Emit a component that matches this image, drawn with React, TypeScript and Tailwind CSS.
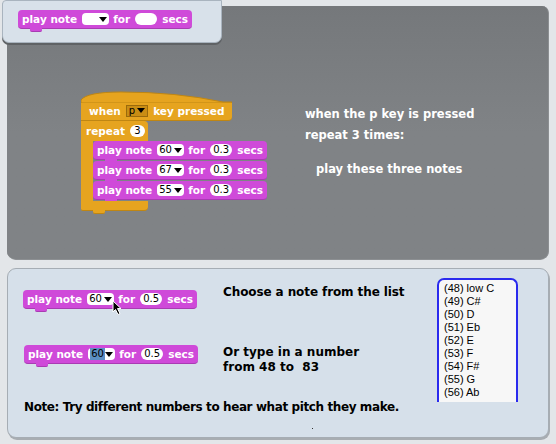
import React from "react";

const F = { fontFamily: '"DejaVu Sans", Verdana, sans-serif' };

function Tri() {
  return <div className="w-0 h-0 border-x-[4px] border-x-transparent border-t-[5px] border-t-black" />;
}

function Drop({ v, hl }: { v?: string; hl?: boolean }) {
  return (
    <div className="flex items-center h-[12px] w-[27px] bg-white rounded-[4px] pl-[2px] pr-[2px] text-black font-normal text-[10px] leading-none">
      {v ? (
        <span className={hl ? "bg-[#5b8fc4] text-black px-[1px] h-[12px] flex items-center" : ""}>{v}</span>
      ) : null}
      <div className="ml-auto">
        <Tri />
      </div>
    </div>
  );
}

function Num({ v, w }: { v?: string; w?: string }) {
  return (
    <div
      className={
        "flex items-center justify-center h-[12px] bg-white rounded-full px-[3px] text-black font-normal text-[10px] leading-none " +
        (w ?? "min-w-[22px]")
      }
    >
      {v}
    </div>
  );
}

function NoteBlock({ note, dur, hl }: { note?: string; dur?: string; hl?: boolean }) {
  return (
    <div
      style={F}
      className="relative flex items-center gap-[5px] h-[19px] w-fit rounded-[4px] bg-[#cf4ad9] border-b border-[#a93bb3] pl-[4px] pr-[4px] text-white font-bold text-[10.5px] leading-none"
    >
      <span>play note</span>
      <Drop v={note} hl={hl} />
      <span className="-ml-[1px]">for</span>
      <Num v={dur} />
      <span>secs</span>
      <div className="absolute left-[12px] top-full w-[12px] h-[4px] bg-[#cf4ad9] border-b border-[#a93bb3] rounded-b-[2px]" />
    </div>
  );
}

function Script() {
  return (
    <div className="relative w-[224px]" style={F}>
      {/* hat */}
      <div className="relative w-[151px]">
        <svg width="151" height="12" viewBox="0 0 151 12" className="block">
          <path d="M0 12 L0 9 Q 6 1 40 1 Q 95 1 142 11 L 151 11 L151 12 Z" fill="#e6a41f" stroke="#bf8613" strokeWidth="1" />
        </svg>
        <div className="flex items-center h-[19px] bg-[#e6a41f] rounded-br-[4px] -mt-[1px] pl-[8px] text-white font-bold text-[10.5px] leading-none gap-[5px] border-b border-[#bf8613]">
          <span>when</span>
          <div className="flex items-center h-[12px] px-[2px] gap-[2px] bg-[#c98d14] border border-[#9a6a0c] text-black font-normal text-[10px] -mt-[1px]">
            <span>p</span>
            <Tri />
          </div>
          <span>key pressed</span>
        </div>
      </div>
      {/* repeat */}
      <div className="relative">
        <div className="flex items-center h-[20px] w-[67px] bg-[#e6a41f] rounded-tr-[4px] pl-[5px] text-white font-bold text-[10.5px] leading-none gap-[5px]">
          <span>repeat</span>
          <Num v="3" w="min-w-[15px]" />
        </div>
        <div className="flex">
          <div className="w-[12px] bg-[#e6a41f]" />
          <div className="flex flex-col gap-[1px] pb-[1px]">
            <NoteBlock note="60" dur="0.3" />
            <NoteBlock note="67" dur="0.3" />
            <NoteBlock note="55" dur="0.3" />
          </div>
        </div>
        <div className="relative h-[10px] w-[67px] bg-[#e6a41f] rounded-br-[4px] rounded-bl-[2px] border-b border-[#bf8613]">
          <div className="absolute left-[12px] top-full w-[12px] h-[4px] bg-[#e6a41f] border-b border-[#bf8613] rounded-b-[2px]" />
        </div>
      </div>
    </div>
  );
}

export default function App() {
  return (
    <div className="relative w-[556px] h-[444px] bg-[#e3e6e9] overflow-hidden">
      {/* gray script area */}
      <div className="ml-[7px] mr-[7px] mt-[6px] h-[254px] rounded-b-[9px] rounded-tr-[7px] bg-[#808386] bg-gradient-to-b from-[#75787b] via-[#808386] to-[#808386] border-r border-b border-[#8c8f92]">
        <div className="flex pt-[85px] pl-[74px]">
          <Script />
          <div
            style={F}
            className="pt-[13px] text-white font-bold text-[11.5px] leading-[21px]"
          >
            <div>when the p key is pressed</div>
            <div>repeat 3 times:</div>
            <div className="mt-[13px] ml-[11px]">play these three notes</div>
          </div>
        </div>
      </div>

      {/* palette tab */}
      <div className="absolute left-[2px] top-0 w-[220px] h-[43px] bg-[#d8e1ea] rounded-b-[7px] rounded-tl-[4px] border border-[#a9b4bf] shadow-[0_2px_0_#5f6265]">
        <div className="pl-[15px] pt-[9px]">
          <NoteBlock />
        </div>
      </div>

      {/* bottom help panel */}
      <div className="relative ml-[7px] mr-[7px] mt-[8px] h-[170px] rounded-t-[9px] rounded-b-[9px] bg-[#d6e0ea] border border-[#a6adb4] shadow-[1px_2px_0_#a8adb2] pl-[15px] pt-[21px]">
        <div className="flex h-[19px]">
          <div className="relative w-[200px]">
            <NoteBlock note="60" dur="0.5" />
            <svg className="absolute left-[89px] top-[10px]" width="10" height="16" viewBox="0 0 10 16">
              <path d="M1 1 L1 12 L3.5 9.5 L6 14.5 L8 13.5 L5.5 8.5 L9 8.5 Z" fill="#000" stroke="#fff" strokeWidth="1" />
            </svg>
          </div>
          <div style={F} className="-mt-[5px] text-black font-bold text-[12px] leading-[15px] tracking-[-0.1px]">
            Choose a note from the list
          </div>
        </div>
        <div className="flex mt-[36px] pl-[1px]">
          <div className="w-[199px]">
            <NoteBlock note="60" dur="0.5" hl />
          </div>
          <div style={F} className="text-black font-bold text-[12px] leading-[15px]">
            <div>Or type in a number</div>
            <div>from 48 to&nbsp; 83</div>
          </div>
        </div>
        <div style={F} className="mt-[25px] ml-[1px] text-black font-bold text-[12px] leading-[15px] tracking-[-0.4px]">
          Note: Try different numbers to hear what pitch they make.
        </div>
        <div className="absolute left-[304px] top-[159px] w-[1px] h-[1px] bg-[#333]" />

        {/* note list */}
        <div
          className="absolute left-[429px] top-[9px] w-[81px] h-[124px] bg-[#f7f7f7] border-2 border-b-0 border-[#2a2aee] rounded-t-[7px] pl-[5px] pt-[2px] text-black text-[11px] leading-[13px]"
          style={{ fontFamily: '"Liberation Sans", Arial, sans-serif' }}
        >
          {["(48) low C", "(49) C#", "(50) D", "(51) Eb", "(52) E", "(53) F", "(54) F#", "(55) G", "(56) Ab"].map((t) => (
            <div key={t}>{t}</div>
          ))}
        </div>
      </div>
    </div>
  );
}
